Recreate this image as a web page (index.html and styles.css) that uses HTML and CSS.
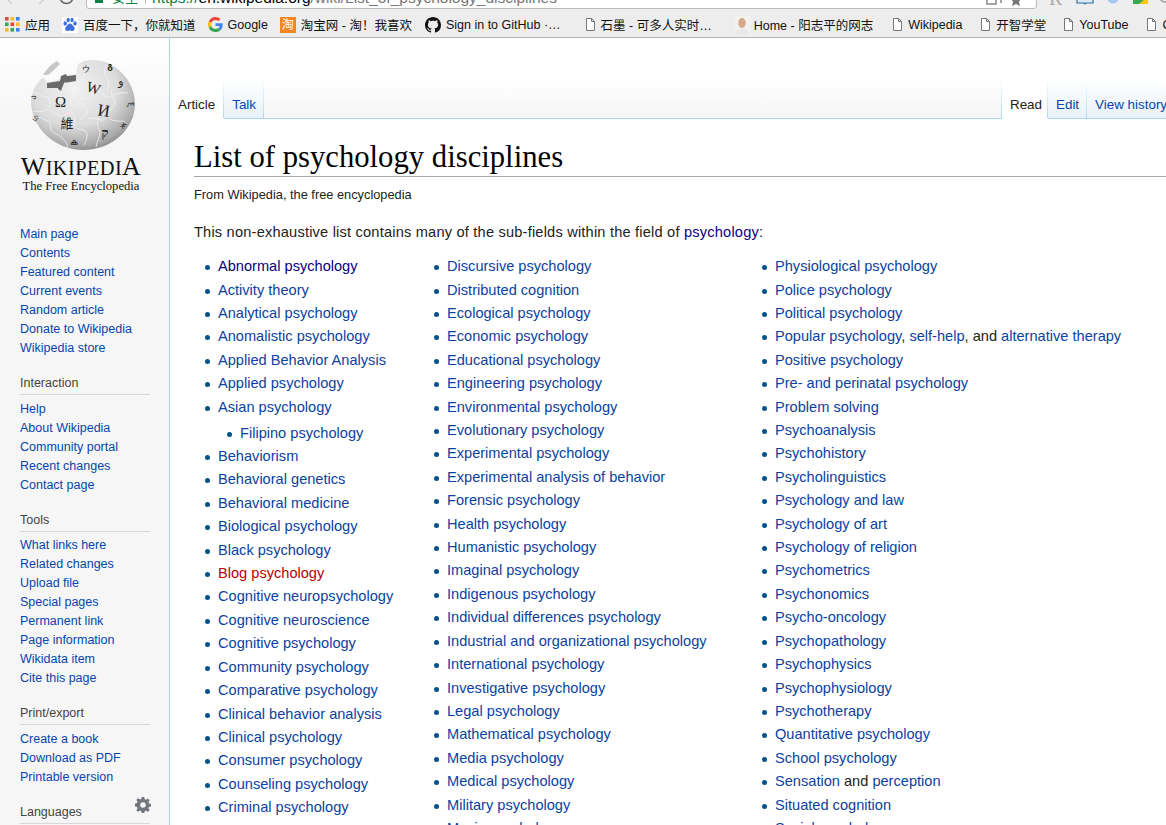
FILE: index.html
```html
<!DOCTYPE html>
<html lang="en">

<head>
  <meta charset="UTF-8">
  <title>List of psychology disciplines - Wikipedia</title>
  <link rel="stylesheet" href="styles.css">
</head>

<body>
  <!-- browser chrome -->
  <div class="address-strip">
    <svg class="nav-buttons" width="86" height="10" viewBox="0 0 86 10">
      <path d="M12-4L8 0l4 4M39-4l4 4-4 4" fill="none" stroke="#cfcfcf" stroke-width="1.500" />
      <path d="M60-3a6.500 6.500 0 0 0 13 0" fill="none" stroke="#666" stroke-width="1.500" />
    </svg>
    <div class="address-box">
      <span class="lock"></span>
      <span class="secure">安全</span>
      <span class="sep"></span>
      <span class="url"><span class="scheme">https://</span><b>en.wikipedia.org</b>/wiki/List_of_psychology_disciplines</span>
      <svg class="box-icons" width="50" height="8" viewBox="0 0 50 8">
        <path d="M1 0v4h9V0M15 0v3" fill="none" stroke="#888" stroke-width="1.500" />
        <path d="M30 4l-4 2 1-4-1-2h8l-1 2 1 4z" fill="#777" />
      </svg>
    </div>
    <svg class="ext-icons" width="129" height="10" viewBox="0 0 129 10">
      <text x="12" y="5" font-size="20" font-family="Liberation Serif" fill="#aaa">R</text>
      <path d="M40 0v3h7l1 1 1-1h7V0" fill="#dbe8f5" stroke="#2d6ea8" stroke-width="1.200" />
      <circle cx="76" cy="-2" r="5.500" fill="#a6c8f5" />
      <path d="M96 -2h15v6H96z" fill="#35a853" />
      <path d="M102 4l7-6h2v6z" fill="#f5c518" />
      <circle cx="128" cy="-3" r="5" fill="none" stroke="#999" stroke-width="1.500" />
    </svg>
  </div>
  <div class="bookmarks">
    <a class="mark m-apps">
      <svg width="15" height="15" viewBox="0 0 15 15">
        <rect x="0" y="0" width="3.600" height="3.600" fill="#e8453c" /><rect x="5.500" y="0" width="3.600" height="3.600" fill="#f9bb2d" /><rect x="11" y="0" width="3.600" height="3.600" fill="#3b82f0" />
        <rect x="0" y="5.500" width="3.600" height="3.600" fill="#3aa757" /><rect x="5.500" y="5.500" width="3.600" height="3.600" fill="#e8453c" /><rect x="11" y="5.500" width="3.600" height="3.600" fill="#f9bb2d" />
        <rect x="0" y="11" width="3.600" height="3.600" fill="#f9bb2d" /><rect x="5.500" y="11" width="3.600" height="3.600" fill="#3aa757" /><rect x="11" y="11" width="3.600" height="3.600" fill="#3b82f0" />
      </svg>应用</a>
    <a class="mark m-baidu">
      <svg width="16" height="16" viewBox="0 0 16 16">
        <rect width="16" height="16" fill="#fff" />
        <ellipse cx="3.200" cy="6.400" rx="1.700" ry="2.200" fill="#3b6fe0" /><ellipse cx="6.200" cy="3" rx="1.600" ry="2.200" fill="#3b6fe0" /><ellipse cx="10" cy="3" rx="1.600" ry="2.200" fill="#3b6fe0" /><ellipse cx="13" cy="6.400" rx="1.700" ry="2.200" fill="#3b6fe0" />
        <path d="M8 6.600c-2 0-2.600 2-4 3.200-1.400 1.400-.8 4.600 1.800 4.200 1-.1 1.400-.4 2.200-.4s1.400.4 2.400.4c2.400 0 2.900-2.900 1.600-4.200C10.600 8.600 10 6.600 8 6.600z" fill="#3b6fe0" />
      </svg>百度一下，你就知道</a>
    <a class="mark m-google">
      <svg width="15" height="15" viewBox="0 0 48 48">
        <path fill="#ea4335" d="M24 9.500c3.500 0 6.700 1.200 9.200 3.600l6.900-6.900C35.900 2.400 30.400 0 24 0 14.600 0 6.500 5.400 2.600 13.200l8 6.200C12.400 13.600 17.700 9.500 24 9.500z" />
        <path fill="#4285f4" d="M47 24.500c0-1.600-.1-3.100-.4-4.500H24v9h13c-.6 3-2.200 5.500-4.800 7.200l7.700 6c4.500-4.200 7.100-10.300 7.100-17.700z" />
        <path fill="#fbbc05" d="M10.600 28.600A14.500 14.500 0 0 1 10.600 19.400l-8-6.200a24 24 0 0 0 0 21.600l8-6.200z" />
        <path fill="#34a853" d="M24 48c6.500 0 11.900-2.100 15.900-5.800l-7.700-6c-2.200 1.500-5 2.300-8.200 2.300-6.300 0-11.600-4.200-13.400-9.900l-8 6.200C6.500 42.600 14.600 48 24 48z" />
      </svg>Google</a>
    <a class="mark m-taobao"><span class="taobao-icon">淘</span>淘宝网 - 淘！我喜欢</a>
    <a class="mark m-github">
      <svg width="16" height="16" viewBox="0 0 16 16">
        <path fill="#111" d="M8 0C3.580 0 0 3.580 0 8c0 3.540 2.290 6.530 5.470 7.590.4.070.55-.17.55-.38 0-.19-.01-.82-.01-1.490-2.010.37-2.530-.49-2.690-.94-.09-.23-.48-.94-.82-1.130-.28-.15-.68-.52-.01-.53.63-.01 1.080.58 1.230.82.720 1.210 1.870.870 2.330.660.070-.520.280-.870.510-1.070-1.780-.200-3.640-.890-3.640-3.950 0-.870.310-1.590.820-2.150-.080-.200-.360-1.020.080-2.120 0 0 .670-.210 2.200.820.640-.180 1.320-.270 2-.270s1.360.090 2 .270c1.530-1.040 2.200-.820 2.200-.820.440 1.100.160 1.920.080 2.120.510.560.820 1.270.820 2.150 0 3.070-1.870 3.750-3.650 3.950.290.250.540.730.540 1.480 0 1.070-.010 1.930-.010 2.200 0 .210.150.460.550.380A8.010 8.010 0 0 0 16 8c0-4.420-3.580-8-8-8z" />
      </svg>Sign in to GitHub ·…</a>
    <a class="mark m-shimo"><svg width="9" height="13" viewBox="0 0 9 13"><path d="M.5.500h5l3 3v9h-8zM5.500.500v3h3" fill="#fff" stroke="#777" /></svg>石墨 - 可多人实时…</a>
    <a class="mark m-home">
      <svg width="16" height="18" viewBox="0 0 16 18">
        <rect width="16" height="18" fill="#f4f2ef" /><path d="M1 18c.5-4 3-5.500 7-5.500s6.500 1.500 7 5.500z" fill="#e8e8e8" /><ellipse cx="8" cy="7" rx="3.800" ry="5" fill="#d9a888" />
      </svg>Home - 阳志平的网志</a>
    <a class="mark m-wiki"><svg width="9" height="13" viewBox="0 0 9 13"><path d="M.5.500h5l3 3v9h-8zM5.500.500v3h3" fill="#fff" stroke="#777" /></svg>Wikipedia</a>
    <a class="mark m-kaizhi"><svg width="9" height="13" viewBox="0 0 9 13"><path d="M.5.500h5l3 3v9h-8zM5.500.500v3h3" fill="#fff" stroke="#777" /></svg>开智学堂</a>
    <a class="mark m-youtube"><svg width="9" height="13" viewBox="0 0 9 13"><path d="M.5.500h5l3 3v9h-8zM5.500.500v3h3" fill="#fff" stroke="#777" /></svg>YouTube</a>
    <a class="mark m-last"><svg width="9" height="13" viewBox="0 0 9 13"><path d="M.5.500h5l3 3v9h-8zM5.500.500v3h3" fill="#fff" stroke="#777" /></svg>C</a>
  </div>

  <div class="page">
    <!-- left panel -->
    <div class="sidebar">
      <div class="logo">
        <svg class="globe" width="125" height="105" viewBox="0 0 125 105">
          <defs>
            <radialGradient id="ball" cx="0.42" cy="0.32" r="0.75">
              <stop offset="0" stop-color="#f2f2f2" />
              <stop offset="0.55" stop-color="#dcdcdc" />
              <stop offset="0.85" stop-color="#a8a8a8" />
              <stop offset="1" stop-color="#777" />
            </radialGradient>
          </defs>
          <path d="M11 50C12 40 17 32 24 27L27 33L56 24L58 14L64 11C72 9 80 10 88 13C104 21 115 36 115 54C115 78 93 100 63 100C35 100 11 78 11 50Z" fill="url(#ball)" />
          <path d="M23 25C26 20 30 15 37 11L40 14L34 20L28 25Z" fill="#c8c8c8" />
          <path d="M27 33L40 31L41 26L46 24L47 26L56 25L56 31L44 33L42 38L41 41L38 39L38 38L27 38Z" fill="#6a6a6a" />
          <g fill="none" stroke="#f4f4f4" stroke-width=".8">
            <path d="M12 43c6-2 8 3 13 4s4 0 5 5c1 4 0 5-4 8-5 3-8 1-13 1" />
            <path d="M44 33c6 0 8 4 9 9s-4 6-3 10 6 3 8 0 5-3 9-4 6-7 12-7c4 0 4 5 8 6s10-6 21-4" />
            <path d="M60 12c-2 5 4 8 5 11s-4 6-5 9-3 4-7 6" />
            <path d="M88 14c-6 6-3 11-1 14s3 8 0 12" />
            <path d="M30 60c5 1 5 5 9 6 5 1 7-4 12-3 4 1 4 5 3 9s1 6 5 7 8 1 8 6-2 8-3 10" />
            <path d="M58 52c3 5 8 3 9 8s-3 7-7 9" />
            <path d="M92 40c-2 6 2 8 3 12s-4 6-6 9-1 7 3 9 8 0 13 2" />
            <path d="M16 68c5-2 8 2 12 3s2 6 3 9 7 4 11 8 6 6 5 10" />
            <path d="M68 69c5-2 8 0 13 1s4-4 8-9" />
            <path d="M78 71c-2 6 2 8 2 12s-3 8-4 14" />
          </g>
          <g class="globe-glyphs">
            <text x="40.500" y="57" font-size="15" font-family="Liberation Serif" text-anchor="middle">Ω</text>
            <text x="72" y="43" font-size="15" font-family="Liberation Serif" text-anchor="middle" transform="rotate(18 72 43)">W</text>
            <text x="83" y="66" font-size="17" font-family="Liberation Serif" text-anchor="middle" transform="rotate(8 83 66)">И</text>
            <text x="47" y="78" font-size="13" font-family="Noto Sans CJK TC" text-anchor="middle">維</text>
            <text x="85" y="87" font-size="13" font-family="Liberation Serif" font-weight="bold" text-anchor="middle">ק</text>
            <text x="101" y="35" font-size="11" font-family="DejaVu Sans" text-anchor="middle">و</text>
            <text x="66" y="22" font-size="8" font-family="Noto Sans CJK JP" text-anchor="middle">ウ</text>
            <text x="90" y="19" font-size="9" font-family="DejaVu Sans" font-weight="bold" text-anchor="middle">გ</text>
            <text x="16" y="48" font-size="8" font-family="DejaVu Sans" text-anchor="middle" transform="rotate(-70 16 48)">ა</text>
            <text x="17" y="70" font-size="8" font-family="DejaVu Sans" text-anchor="middle" transform="rotate(-50 17 70)">ம</text>
            <text x="108" y="55" font-size="8" font-family="DejaVu Sans" text-anchor="middle" transform="rotate(80 108 55)">ξ</text>
            <text x="105" y="77" font-size="8" font-family="DejaVu Sans" text-anchor="middle" transform="rotate(-50 105 77)">ж</text>
            <text x="54" y="95" font-size="8" font-family="DejaVu Sans" text-anchor="middle">ക</text>
          </g>
        </svg>
        <div class="wordmark">W<small>IKIPEDI</small>A</div>
        <div class="tagline">The Free Encyclopedia</div>
      </div>

      <ul class="nav first">
        <li>Main page</li>
        <li>Contents</li>
        <li>Featured content</li>
        <li>Current events</li>
        <li>Random article</li>
        <li>Donate to Wikipedia</li>
        <li>Wikipedia store</li>
      </ul>

      <h3>Interaction</h3>
      <ul class="nav">
        <li>Help</li>
        <li>About Wikipedia</li>
        <li>Community portal</li>
        <li>Recent changes</li>
        <li>Contact page</li>
      </ul>

      <h3>Tools</h3>
      <ul class="nav">
        <li>What links here</li>
        <li>Related changes</li>
        <li>Upload file</li>
        <li>Special pages</li>
        <li>Permanent link</li>
        <li>Page information</li>
        <li>Wikidata item</li>
        <li>Cite this page</li>
      </ul>

      <h3>Print/export</h3>
      <ul class="nav">
        <li>Create a book</li>
        <li>Download as PDF</li>
        <li>Printable version</li>
      </ul>

      <h3 class="languages">Languages
        <svg class="gear" width="16" height="16" viewBox="0 0 16 16">
          <path fill="#72777d" fill-rule="evenodd" d="M6.700 0h2.600l.4 2.200 1.400.6L12.900 1.500l1.800 1.800-1.300 1.800.6 1.400 2 .4v2.600l-2 .4-.6 1.400 1.300 1.800-1.800 1.800-1.800-1.300-1.400.6-.4 2H6.700l-.4-2-1.400-.6-1.800 1.300-1.800-1.800 1.300-1.800-.6-1.400-2-.4V6.500l2-.4.6-1.400-1.300-1.800 1.800-1.800 1.800 1.300 1.400-.6zM8 5.200a2.800 2.800 0 1 0 0 5.600 2.800 2.800 0 0 0 0-5.600z" />
        </svg>
      </h3>
    </div>

    <div class="main">
      <div class="tabs">
        <div class="tab-group">
          <a class="tab selected article">Article</a>
          <a class="tab">Talk</a>
        </div>
        <div class="tab-group right">
          <a class="tab selected read">Read</a>
          <a class="tab">Edit</a>
          <a class="tab">View history</a>
        </div>
      </div>

      <div class="content">
        <h1>List of psychology disciplines</h1>
        <p class="from">From Wikipedia, the free encyclopedia</p>
        <p class="intro">This non-exhaustive list contains many of the sub-fields within the field of <a>psychology</a>:</p>

        <div class="lists">
          <ul class="col col-a">
            <li class="visited">Abnormal psychology</li>
            <li>Activity theory</li>
            <li>Analytical psychology</li>
            <li>Anomalistic psychology</li>
            <li>Applied Behavior Analysis</li>
            <li>Applied psychology</li>
            <li>Asian psychology
              <ul>
                <li>Filipino psychology</li>
              </ul>
            </li>
            <li>Behaviorism</li>
            <li>Behavioral genetics</li>
            <li>Behavioral medicine</li>
            <li>Biological psychology</li>
            <li>Black psychology</li>
            <li class="new">Blog psychology</li>
            <li>Cognitive neuropsychology</li>
            <li>Cognitive neuroscience</li>
            <li>Cognitive psychology</li>
            <li>Community psychology</li>
            <li>Comparative psychology</li>
            <li>Clinical behavior analysis</li>
            <li>Clinical psychology</li>
            <li>Consumer psychology</li>
            <li>Counseling psychology</li>
            <li>Criminal psychology</li>
            <li>Critical psychology</li>
          </ul>
          <ul class="col col-b">
            <li>Discursive psychology</li>
            <li>Distributed cognition</li>
            <li>Ecological psychology</li>
            <li>Economic psychology</li>
            <li>Educational psychology</li>
            <li>Engineering psychology</li>
            <li>Environmental psychology</li>
            <li>Evolutionary psychology</li>
            <li>Experimental psychology</li>
            <li>Experimental analysis of behavior</li>
            <li>Forensic psychology</li>
            <li>Health psychology</li>
            <li>Humanistic psychology</li>
            <li>Imaginal psychology</li>
            <li>Indigenous psychology</li>
            <li>Individual differences psychology</li>
            <li>Industrial and organizational psychology</li>
            <li>International psychology</li>
            <li>Investigative psychology</li>
            <li>Legal psychology</li>
            <li>Mathematical psychology</li>
            <li>Media psychology</li>
            <li>Medical psychology</li>
            <li>Military psychology</li>
            <li>Music psychology</li>
          </ul>
          <ul class="col col-c">
            <li>Physiological psychology</li>
            <li>Police psychology</li>
            <li>Political psychology</li>
            <li>Popular psychology<span class="plain">, </span>self-help<span class="plain">, and </span>alternative therapy</li>
            <li>Positive psychology</li>
            <li>Pre- and perinatal psychology</li>
            <li>Problem solving</li>
            <li>Psychoanalysis</li>
            <li>Psychohistory</li>
            <li>Psycholinguistics</li>
            <li>Psychology and law</li>
            <li>Psychology of art</li>
            <li>Psychology of religion</li>
            <li>Psychometrics</li>
            <li>Psychonomics</li>
            <li>Psycho-oncology</li>
            <li>Psychopathology</li>
            <li>Psychophysics</li>
            <li>Psychophysiology</li>
            <li>Psychotherapy</li>
            <li>Quantitative psychology</li>
            <li>School psychology</li>
            <li>Sensation<span class="plain"> and </span>perception</li>
            <li>Situated cognition</li>
            <li>Social psychology</li>
          </ul>
        </div>
      </div>
    </div>
  </div>
</body>

</html>
```

FILE: styles.css
```css
html,
body {
  margin: 0;
  height: 825px;
  overflow: hidden;
  background: #fff;
  font-family: "Liberation Sans", "Noto Sans CJK SC", sans-serif;
  color: #000;
}

a {
  color: inherit;
  text-decoration: none;
}

ul {
  list-style: none;
  margin: 0;
  padding: 0;
}

/* browser chrome */
.address-strip {
  height: 10px;
  background: #eee;
  overflow: hidden;
  display: flex;
}

.nav-buttons,
.ext-icons {
  display: block;
  flex: none;
}

.ext-icons {
  overflow: visible;
}

.address-box {
  width: 951px;
  height: 19px;
  flex: none;
  margin-top: -10px;
  background: #fff;
  border: 1px solid #bbb;
  border-radius: 3px;
  box-sizing: border-box;
  line-height: 14px;
  white-space: nowrap;
  display: flex;
  align-items: flex-start;
  padding-left: 8px;
}

.lock {
  width: 8px;
  height: 12px;
  background: #0b8043;
  flex: none;
}

.secure {
  margin-left: 9px;
  color: #0b8043;
  font-size: 13px;
}

.sep {
  width: 1px;
  height: 13px;
  background: #bbb;
  margin: 0 6px 0 7px;
}

.url {
  font-size: 15.500px;
  color: #777;
}

.scheme {
  color: #0b8043;
}

.url b {
  color: #000;
  font-weight: normal;
}

.box-icons {
  margin-left: auto;
  align-self: flex-end;
  flex: none;
}

.bookmarks {
  height: 25px;
  padding-top: 2px;
  background: #ededed;
  border-bottom: 1px solid #b5b5b5;
  display: flex;
  align-items: center;
  font-size: 12.500px;
  color: #111;
  white-space: nowrap;
  overflow: hidden;
}

.mark {
  display: flex;
  align-items: center;
  gap: 5px;
  flex: none;
}

.m-apps { margin-left: 5px; }
.m-baidu { margin-left: 12px; }
.m-google { margin-left: 12px; }
.m-taobao { margin-left: 12px; }
.m-github { margin-left: 13px; }
.m-shimo { margin-left: 25px; gap: 6px; }
.m-home { margin-left: 22px; gap: 4px; }
.m-wiki { margin-left: 20px; gap: 6px; }
.m-kaizhi { margin-left: 19px; gap: 6px; }
.m-youtube { margin-left: 18px; gap: 6px; }
.m-last { margin-left: 19px; gap: 6px; }

.taobao-icon {
  width: 16px;
  height: 16px;
  background: #f5861f;
  color: #fff;
  font-size: 12px;
  line-height: 16px;
  text-align: center;
}

/* wikipedia page */
.page {
  display: flex;
  height: 787px;
  overflow: hidden;
}

.sidebar {
  width: 170px;
  flex: none;
  box-sizing: border-box;
  border-right: 1px solid #a7d7f9;
  background: linear-gradient(#fff 0, #f6f6f6 80px);
  padding-top: 12px;
  font-size: 12.500px;
}

.logo {
  display: flex;
  flex-direction: column;
  align-items: center;
  padding-right: 7px;
  color: #111;
  font-family: "Liberation Serif", serif;
}

.globe {
  display: block;
  align-self: flex-start;
  margin-left: 20px;
}

.globe-glyphs {
  fill: #222;
}

.wordmark {
  font-size: 26px;
  line-height: 22px;
  margin-top: 1px;
  letter-spacing: .4px;
}

.wordmark small {
  font-size: 20.400px;
}

.tagline {
  font-size: 12.600px;
  line-height: 17px;
  margin-bottom: -1px;
  margin-top: -1px;
}

.nav {
  padding-left: 20px;
  color: #0645ad;
}

.nav li {
  height: 19px;
  line-height: 19px;
}

.nav.first {
  margin-top: 31px;
}

.sidebar h3 {
  font-weight: normal;
  font-size: 12.500px;
  line-height: 18px;
  color: #444;
  margin: 16px 19px 4.500px 20px;
  padding-bottom: 2px;
  border-bottom: 1px solid #d8d8d8;
  position: relative;
}

.gear {
  position: absolute;
  right: -1px;
  top: -6px;
}

/* tabs */
.main {
  flex: 1;
  min-width: 0;
}

.tabs {
  height: 81px;
  box-sizing: border-box;
  display: flex;
  justify-content: space-between;
  align-items: flex-end;
  background: linear-gradient(#fff 50%, #f6f6f6);
  border-bottom: 1px solid #a7d7f9;
  font-size: 13.400px;
  color: #0645ad;
}

.tab-group {
  display: flex;
  height: 39px;
  margin-bottom: -1px;
}

.tab-group.right {
  width: 165px;
  overflow: hidden;
  flex: none;
  background: linear-gradient(#fff, #a7d7f9) left / 1px 100% no-repeat;
  padding-left: 1px;
  box-sizing: border-box;
}

.tab {
  display: block;
  flex: none;
  box-sizing: border-box;
  padding: 17px 8px 0;
  line-height: 16px;
  height: 39px;
  background:
    linear-gradient(#fff, #a7d7f9) right / 1px 100% no-repeat,
    linear-gradient(#fff, #e8f2f8);
  border-bottom: 1px solid #a7d7f9;
  white-space: nowrap;
}

.tab.selected {
  background:
    linear-gradient(#fff, #a7d7f9) right / 1px 100% no-repeat,
    #fff;
  color: #222;
  border-bottom-color: #fff;
}

.tab.article {
  padding-right: 9px;
}

.tab.read {
  padding-right: 6px;
}

/* article */
.content {
  padding-left: 24px;
  font-size: 14.600px;
  white-space: nowrap;
}

h1 {
  margin: 18px 0 0;
  font-family: "Liberation Serif", serif;
  font-weight: normal;
  font-size: 30.700px;
  line-height: 41px;
  height: 39px;
  border-bottom: 1px solid #a2a9b1;
}

.from {
  margin: 9px 0 0;
  font-size: 12.800px;
  line-height: 17px;
  color: #222;
}

.intro {
  margin: 20px 0 0;
  line-height: 19px;
  letter-spacing: .2px;
  color: #222;
}

.intro a {
  color: #0b0080;
}

.lists {
  display: flex;
  margin-top: 13.200px;
  color: #0b429f;
}

.col {
  flex: none;
  padding-left: 24px;
  box-sizing: border-box;
}

.col-a { width: 229px; }
.col-b { width: 328px; }
.col-c { width: 372px; }

.col li {
  position: relative;
  line-height: 23.400px;
}

.col li::before {
  content: "";
  position: absolute;
  left: -13px;
  top: 10px;
  width: 5px;
  height: 5px;
  border-radius: 50%;
  background: #00528c;
}

.col ul {
  margin: 2.600px 0 0 22px;
}

.plain {
  color: #222;
}

.visited {
  color: #0b0080;
}

.new {
  color: #ba0000;
}
```
